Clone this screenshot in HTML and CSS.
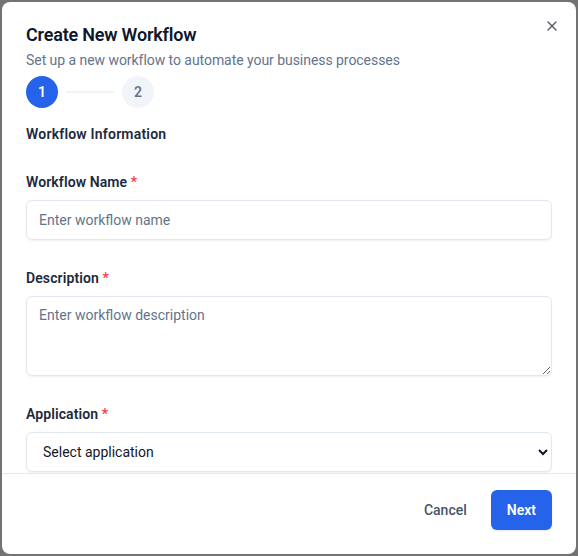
FILE: index.html
```html
<!DOCTYPE html>
<html lang="en">
<head>
<meta charset="utf-8">
<title>Create New Workflow</title>
<link rel="stylesheet" href="styles.css">
</head>
<body>
<div class="modal">
  <button class="close" aria-label="Close">
    <svg width="16" height="16" viewBox="0 0 24 24" fill="none" stroke="currentColor" stroke-width="2" stroke-linecap="round" stroke-linejoin="round"><path d="M18 6 6 18"/><path d="m6 6 12 12"/></svg>
  </button>
  <div class="body">
    <div class="header">
      <h2 class="title">Create New Workflow</h2>
      <p class="subtitle">Set up a new workflow to automate your business processes</p>
      <div class="steps">
        <span class="step active">1</span>
        <span class="step-line"></span>
        <span class="step">2</span>
      </div>
    </div>
    <div class="form">
      <h3 class="section">Workflow Information</h3>
      <div class="field">
        <label class="label">Workflow Name <span class="req">*</span></label>
        <input class="input" type="text" placeholder="Enter workflow name">
      </div>
      <div class="field">
        <label class="label">Description <span class="req">*</span></label>
        <textarea class="input textarea" placeholder="Enter workflow description"></textarea>
      </div>
      <div class="field">
        <label class="label">Application <span class="req">*</span></label>
        <select class="input select">
          <option>Select application</option>
        </select>
      </div>
    </div>
  </div>
  <div class="footer">
    <button class="btn ghost">Cancel</button>
    <button class="btn primary">Next</button>
  </div>
</div>
</body>
</html>
```

FILE: styles.css
```css
* { box-sizing: border-box; }
html, body { margin: 0; padding: 0; }
body {
  background: #737373;
  font-family: Roboto, "Liberation Sans", sans-serif;
  color: #0f172a;
  height: 556px;
  overflow: hidden;
  padding: 2px;
}
.modal {
  position: relative;
  width: 574px;
  height: 552px;
  background: #fff;
  border-radius: 8px;
  overflow: hidden;
  display: flex;
  flex-direction: column;
}
.close {
  position: absolute;
  top: 16px;
  right: 16px;
  width: 16px;
  height: 16px;
  padding: 0;
  border: 0;
  background: none;
  color: #0f172a;
  opacity: 0.7;
  display: flex;
}
.body {
  flex: 1;
  overflow: hidden;
  padding: 24px 24px 0;
  display: flex;
  flex-direction: column;
  gap: 16px;
}
.header { display: flex; flex-direction: column; gap: 6px; }
.title {
  margin: 0;
  font-size: 18px;
  line-height: 18px;
  font-weight: 600;
  letter-spacing: -0.2px;
}
.subtitle {
  margin: 0;
  font-size: 14px;
  line-height: 20px;
  color: #64748b;
  letter-spacing: -0.05px;
}
.steps { display: flex; align-items: center; gap: 8px; }
.step {
  width: 32px;
  height: 32px;
  border-radius: 50%;
  background: #f1f5f9;
  color: #64748b;
  font-size: 14px;
  font-weight: 600;
  display: flex;
  align-items: center;
  justify-content: center;
}
.step.active { background: #2563eb; color: #fff; }
.step-line { width: 48px; height: 2px; background: #f1f5f9; }
.form { display: flex; flex-direction: column; gap: 28px; }
.section {
  margin: 0;
  font-size: 14px;
  line-height: 20px;
  font-weight: 600;
  color: #1e293b;
  letter-spacing: 0.2px;
}
.field { display: flex; flex-direction: column; gap: 8px; }
.label {
  font-size: 14px;
  line-height: 20px;
  font-weight: 600;
  color: #1e293b;
  letter-spacing: 0.1px;
}
.req { color: #ef4444; }
.input {
  display: block;
  width: 100%;
  height: 40px;
  border: 1px solid #e2e8f0;
  border-radius: 6px;
  background: #fff;
  padding: 8px 12px;
  font-family: inherit;
  font-size: 14px;
  color: #0f172a;
  box-shadow: 0 1px 2px rgba(0,0,0,0.06);
  outline: none;
}
.input::placeholder { color: #64748b; }
.textarea { height: 80px; resize: vertical; padding-top: 10px; }
.select { padding: 0 12px; color: #111827; }
.footer {
  border-top: 1px solid #e2e8f0;
  padding: 16px 24px 24px;
  display: flex;
  justify-content: flex-end;
  gap: 8px;
}
.btn {
  height: 40px;
  padding: 0 16px;
  border: 0;
  border-radius: 6px;
  font-family: inherit;
  font-size: 14px;
  font-weight: 600;
}
.ghost { background: none; color: #475569; font-weight: 500; }
.primary { background: #2563eb; color: #fff; box-shadow: 0 1px 2px rgba(0,0,0,0.1); }
```
